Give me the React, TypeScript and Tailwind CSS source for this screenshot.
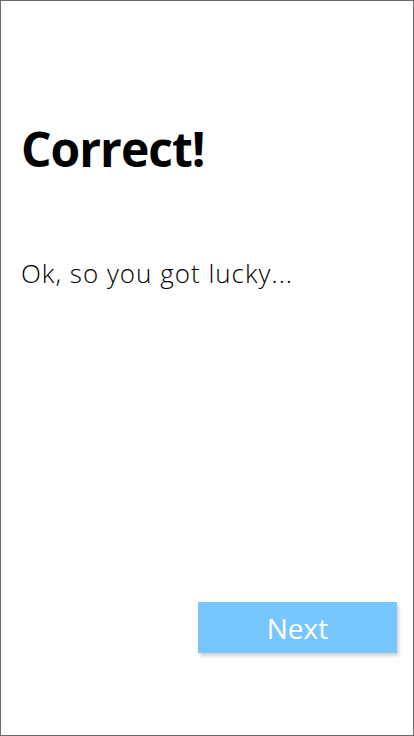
export default function App() {
  return (
    <div className="h-[736px] w-[414px] border border-[#6b6b6b] bg-white flex flex-col font-['Open_Sans',sans-serif]">
      <h1 className="mt-[112px] ml-[20px] text-[48px] leading-[72px] font-bold text-black tracking-[-1px]">
        Correct!
      </h1>
      <p className="mt-[70px] ml-[20px] text-[26px] leading-[36px] font-light text-black tracking-[1px]">
        Ok, so you got lucky...
      </p>
      <div className="mt-auto mb-[82px] mr-[16px] flex justify-end">
        <button className="h-[51px] w-[199px] bg-[#78c6ff] text-white text-[28px] leading-[53px] font-normal shadow-[2px_3px_3px_rgba(0,0,0,0.18)]">
          Next
        </button>
      </div>
    </div>
  );
}
